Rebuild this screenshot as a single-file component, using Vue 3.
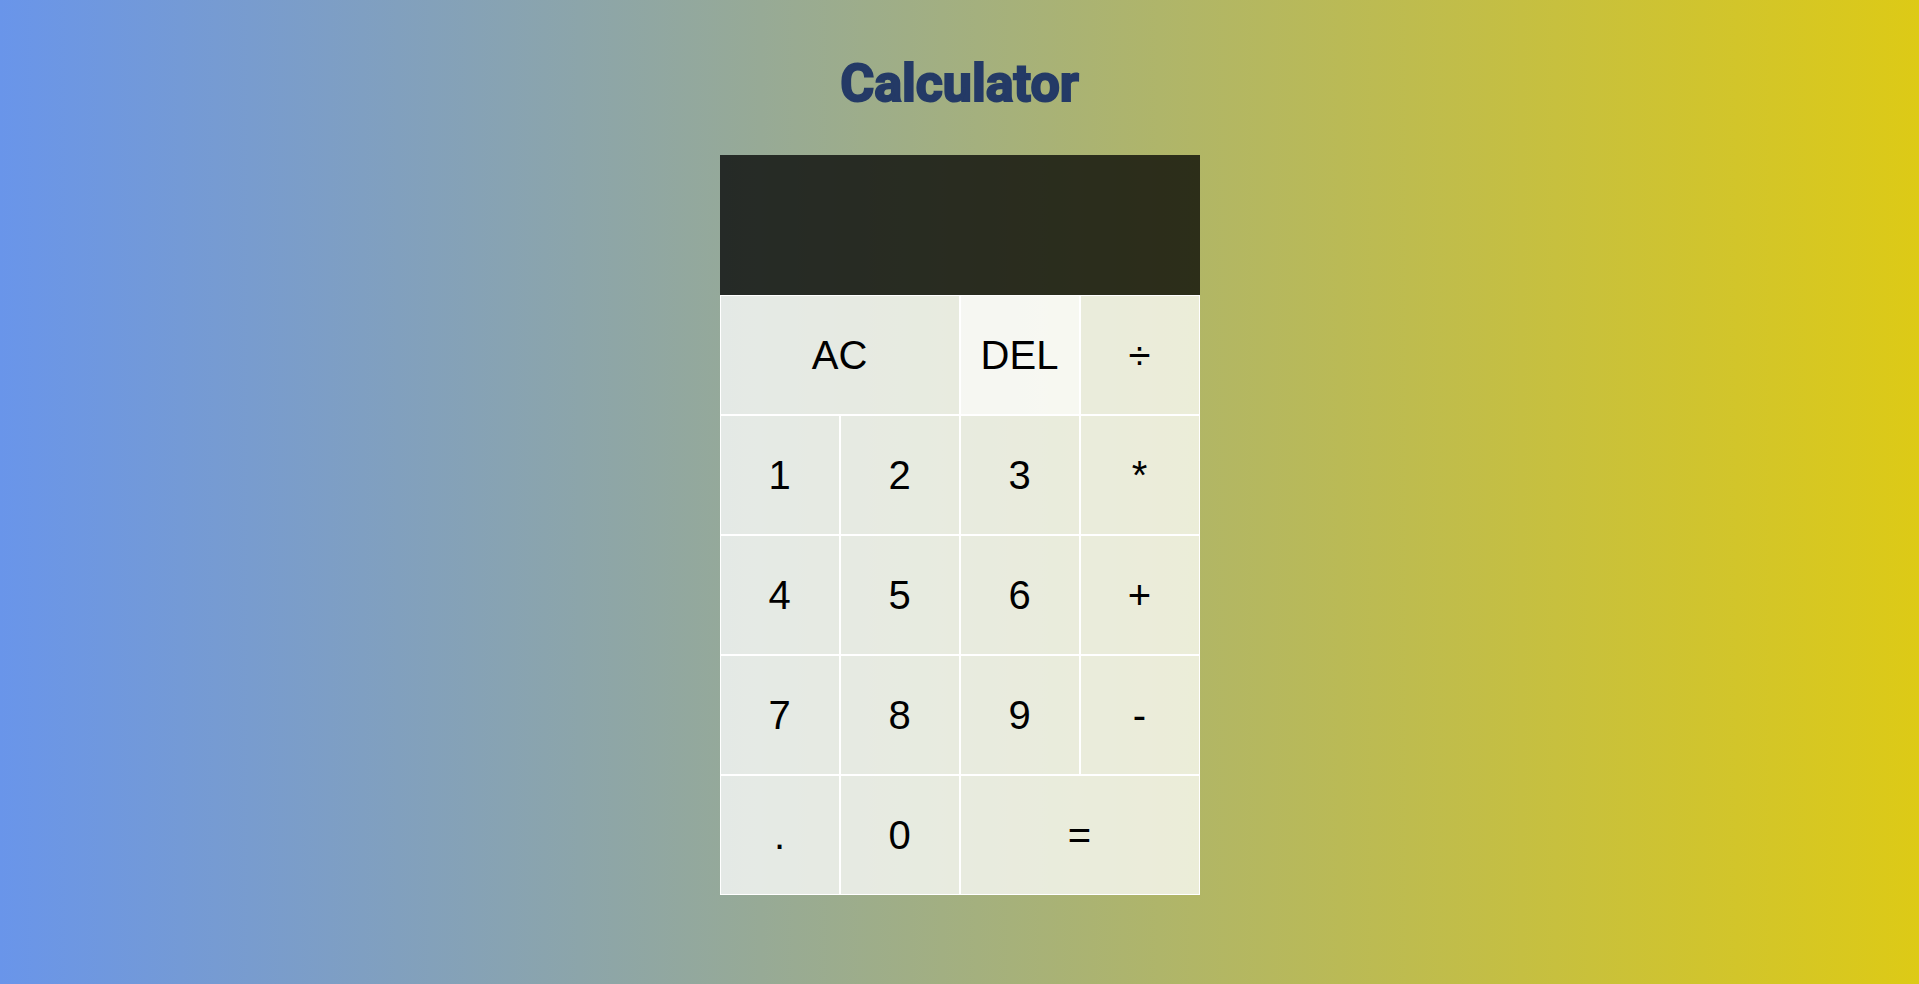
<script setup>
import { ref } from 'vue'

const keys = [
  { label: 'AC', wide: true },
  { label: 'DEL', active: true },
  { label: '÷' },
  { label: '1' }, { label: '2' }, { label: '3' }, { label: '*' },
  { label: '4' }, { label: '5' }, { label: '6' }, { label: '+' },
  { label: '7' }, { label: '8' }, { label: '9' }, { label: '-' },
  { label: '.' }, { label: '0' },
  { label: '=', wide: true },
]

const previous = ref('')
const current = ref('')

function compute(a, op, b) {
  if (op === '+') return a + b
  if (op === '-') return a - b
  if (op === '*') return a * b
  return a / b
}

function evaluate() {
  const [a, op] = previous.value.split(' ')
  if (!op || current.value === '') return
  current.value = String(compute(Number(a), op, Number(current.value)))
  previous.value = ''
}

function press(label) {
  if (label === 'AC') {
    previous.value = ''
    current.value = ''
  } else if (label === 'DEL') {
    current.value = current.value.slice(0, -1)
  } else if (label === '=') {
    evaluate()
  } else if ('÷*+-'.includes(label)) {
    if (current.value === '') return
    evaluate()
    previous.value = `${current.value} ${label}`
    current.value = ''
  } else if (label !== '.' || !current.value.includes('.')) {
    current.value += label
  }
}
</script>

<template>
  <main class="page">
    <h1 class="title">Calculator</h1>
    <div class="calculator">
      <output class="display">
        <span class="previous">{{ previous }}</span>
        <span class="current">{{ current }}</span>
      </output>
      <button
        v-for="key in keys"
        :key="key.label"
        type="button"
        class="key"
        :class="{ wide: key.wide, active: key.active }"
        @click="press(key.label)"
      >{{ key.label }}</button>
    </div>
  </main>
</template>

<style>
body {
  margin: 0;
}
</style>

<style scoped>
.page {
  box-sizing: border-box;
  min-height: 100vh;
  padding: 40px 0;
  background: linear-gradient(to right, #6995ea, #ddca16);
  font-family: "Liberation Sans", Arial, sans-serif;
}

.title {
  margin: 0 0 27px;
  color: #243a66;
  font-family: Roboto, "Liberation Sans", sans-serif;
  font-size: 52px;
  font-weight: 700;
  line-height: 88px;
  text-align: center;
  -webkit-text-stroke: 2px #243a66;
}

.calculator {
  display: grid;
  grid-template-columns: repeat(4, 120px);
  grid-template-rows: minmax(140px, auto) repeat(5, 120px);
  justify-content: center;
}

.display {
  grid-column: 1 / -1;
  display: flex;
  flex-direction: column;
  align-items: flex-end;
  justify-content: space-around;
  padding: 10px;
  background: rgba(0, 0, 0, 0.75);
  color: #fff;
  overflow-wrap: anywhere;
}

.previous {
  font-size: 24px;
}

.current {
  font-size: 40px;
}

.key {
  padding: 0;
  border: 1px solid #fff;
  border-radius: 0;
  background: rgba(255, 255, 255, 0.75);
  color: #000;
  font-family: inherit;
  font-size: 40px;
  cursor: pointer;
}

.key:hover,
.active {
  background: rgba(255, 255, 255, 0.9);
}

.wide {
  grid-column: span 2;
}
</style>
